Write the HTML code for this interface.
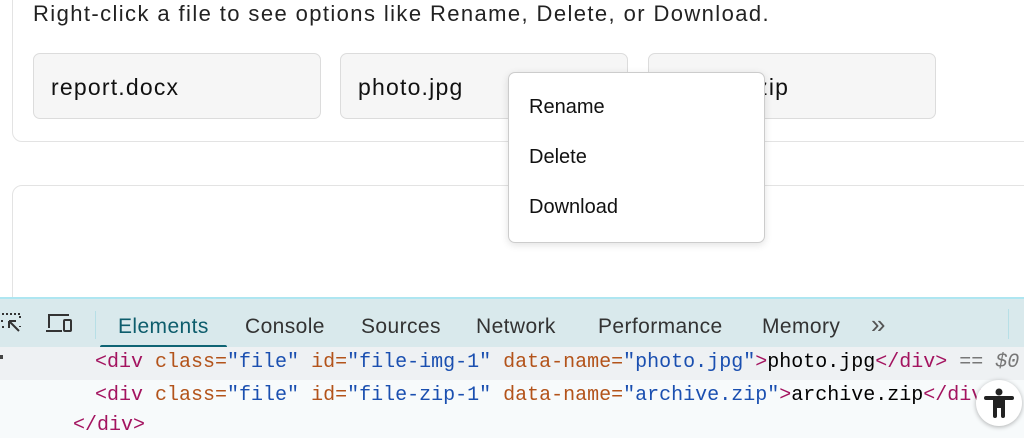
<!DOCTYPE html>
<html><head><style>
body{margin:0;width:1024px;height:438px;overflow:hidden;background:#fff;font-family:"Liberation Sans",sans-serif;position:relative}
.card{position:absolute;border:1px solid #e3e3e3;border-radius:10px;background:#fff}
.f{position:absolute;top:53px;width:288px;height:66px;border:1px solid #dcdcdc;border-radius:7px;background:#f6f6f6;font-size:23px;letter-spacing:1.2px;color:#111;line-height:66px;padding-left:17px;box-sizing:border-box}
.menu{position:absolute;left:508px;top:72px;width:255px;height:169px;background:#fff;border:1px solid #ccc;border-radius:7px;box-shadow:0 2px 8px rgba(0,0,0,.12);font-size:20px;color:#111}
.menu div{position:absolute;left:20px}
.dt{position:absolute;left:0;top:297px;width:1024px;height:50px;background:#d9e9ec;border-top:2px solid #aee6f1}
.tab{position:absolute;top:16px;font-size:21px;letter-spacing:.4px;color:#333}
.code{position:absolute;left:0;width:1100px;font-family:"Liberation Mono",monospace;font-size:20px;white-space:pre;line-height:33px}
.t{color:#a3135f}.a{color:#b3531a}.v{color:#1a4fb0}
</style></head><body>
<div class="card" style="left:12px;top:-20px;width:1030px;height:160px"></div>
<div style="position:absolute;left:33px;top:1px;font-size:22px;letter-spacing:1.4px;color:#222">Right-click a file to see options like Rename, Delete, or Download.</div>
<div class="f" style="left:33px">report.docx</div>
<div class="f" style="left:340px">photo.jpg</div>
<div class="f" style="left:648px">archive.zip</div>
<div class="card" style="left:12px;top:185px;width:1030px;height:200px"></div>
<div class="menu"><div style="top:23px">Rename</div><div style="top:73px">Delete</div><div style="top:123px">Download</div></div>
<div class="dt">
<svg style="position:absolute;left:0;top:12px" width="26" height="24"><path d="M2 3h18v6M2 9v3M2 16h4M20 15v1" stroke="#333" stroke-width="2" stroke-dasharray="2 2" fill="none"/><path d="M9 10l10 10M9 10h7M9 10v7" stroke="#333" stroke-width="2" fill="none"/></svg>
<svg style="position:absolute;left:45px;top:13px" width="32" height="24"><path d="M4 16V3h20M1 19h16" stroke="#333" stroke-width="2" fill="none"/><rect x="19" y="8" width="7" height="11" rx="1" stroke="#333" stroke-width="2" fill="none"/></svg>
<div style="position:absolute;left:95px;top:12px;width:1px;height:28px;background:#b7dfe6"></div>
<div class="tab" style="left:118px;color:#0d5d6c">Elements</div>
<div style="position:absolute;left:100px;top:46px;width:127px;height:4px;background:#0e6474;border-radius:2px 2px 0 0"></div>
<div class="tab" style="left:245px">Console</div>
<div class="tab" style="left:361px">Sources</div>
<div class="tab" style="left:476px">Network</div>
<div class="tab" style="left:598px">Performance</div>
<div class="tab" style="left:762px">Memory</div>
<div class="tab" style="left:871px;top:10px;font-size:26px;color:#555">&raquo;</div>
<div style="position:absolute;left:1008px;top:10px;width:1px;height:30px;background:#b7dfe6"></div>
</div>
<div style="position:absolute;left:0;top:347px;width:1024px;height:33px;background:#eef1f3"></div>
<div style="position:absolute;left:0;top:380px;width:1024px;height:58px;background:#f7fafb"></div>
<div class="code" style="top:346px;left:95px"><span class="t">&lt;div</span> <span class="a">class=</span><span class="v">"file"</span> <span class="a">id=</span><span class="v">"file-img-1"</span> <span class="a">data-name=</span><span class="v">"photo.jpg"</span><span class="t">&gt;</span>photo.jpg<span class="t">&lt;/div&gt;</span> <span style="color:#777">== <i>$0</i></span></div>
<div class="code" style="top:379px;left:95px"><span class="t">&lt;div</span> <span class="a">class=</span><span class="v">"file"</span> <span class="a">id=</span><span class="v">"file-zip-1"</span> <span class="a">data-name=</span><span class="v">"archive.zip"</span><span class="t">&gt;</span>archive.zip<span class="t">&lt;/div&gt;</span></div>
<div class="code" style="top:409px;left:73px"><span class="t">&lt;/div&gt;</span></div>
<div style="position:absolute;left:0;top:355px;width:3px;height:4px;background:#444"></div>
<div style="position:absolute;left:976px;top:380px;width:46px;height:46px;border-radius:50%;background:#fff;box-shadow:0 1px 5px rgba(0,0,0,.3)">
<svg width="46" height="46"><circle cx="23" cy="12" r="3.5" fill="#222"/><path d="M10 18h26" stroke="#222" stroke-width="4" stroke-linecap="round"/><path d="M19 18v18M27 18v18" stroke="#222" stroke-width="4" stroke-linecap="round"/><rect x="19" y="18" width="8" height="10" fill="#222"/></svg></div>
</body></html>
